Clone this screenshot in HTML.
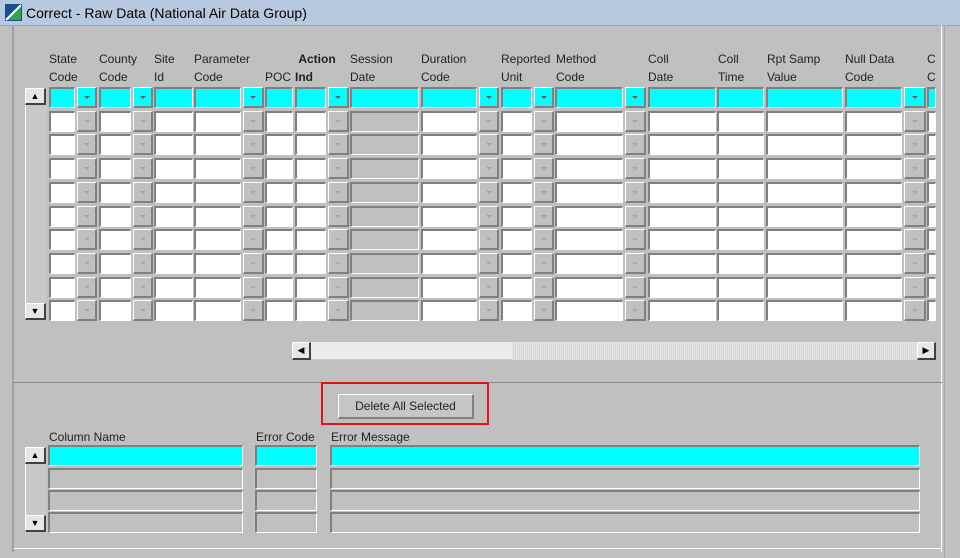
<!DOCTYPE html>
<html><head><meta charset="utf-8"><style>
body{margin:0;width:960px;height:558px;background:#c0c0c0;position:relative;overflow:hidden;font-family:"Liberation Sans",Arial,sans-serif;font-size:12px;color:#000}
.a{position:absolute}
.title{left:0;top:0;width:960px;height:25px;background:#b7c9de;border-bottom:1px solid #9aa8b8}
.title span{position:absolute;left:26px;top:5px;font-size:14px;color:#000}
.f{position:absolute;box-sizing:border-box;border-top:2px solid #808080;border-left:2px solid #808080;border-bottom:1px solid #fff;border-right:1px solid #fff;background:#fff}
.g{background:#c0c0c0}
.c{background:#00ffff}
.b{position:absolute;box-sizing:border-box;background:#c0c0c0;border-top:1px solid #fff;border-left:1px solid #fff;border-bottom:2px solid #808080;border-right:2px solid #808080}
.b.c{background:#00ffff}
.b::after{content:"";position:absolute;left:50%;top:50%;margin:-1px 0 0 -3px;border-left:3px solid transparent;border-right:3px solid transparent;border-top:3px solid #a8a8a8}
.b.c::after{border-top-color:#606060}
.sb{position:absolute;box-sizing:border-box;background:#e6e6e6;border-top:1px solid #fff;border-left:1px solid #fff;border-bottom:2px solid #404040;border-right:2px solid #404040;font-size:9px;text-align:center;line-height:14px}
.h{position:absolute;line-height:18px;color:#222}
</style></head><body>
<div class="a title"><svg class="a" style="left:5px;top:4px" width="17" height="17"><rect width="17" height="17" fill="#1a4d8c"/><polygon points="1,16 16,1 16,16" fill="#2aa84a"/><line x1="1" y1="16" x2="16" y2="1" stroke="#fff" stroke-width="2"/></svg><span>Correct - Raw Data (National Air Data Group)</span></div>
<div class="a" style="left:12px;top:25px;width:2px;height:527px;background:#a0a0a0"></div>
<div class="a" style="left:941px;top:25px;width:1px;height:527px;background:#fff"></div>
<div class="a" style="left:944px;top:25px;width:1px;height:533px;background:#a8a8a8"></div>
<div class="a" style="left:14px;top:548px;width:928px;height:1px;background:#fff"></div>
<div class="a" style="left:14px;top:382px;width:928px;height:1px;background:#8a8a8a"></div>

<div class="h" style="left:49px;top:50px">State<br>Code</div>
<div class="h" style="left:99px;top:50px">County<br>Code</div>
<div class="h" style="left:154px;top:50px">Site<br>Id</div>
<div class="h" style="left:194px;top:50px">Parameter<br>Code</div>
<div class="h" style="left:265px;top:68px">POC</div>
<div class="h" style="left:295px;top:50px;font-weight:bold">&nbsp;Action<br>Ind</div>
<div class="h" style="left:350px;top:50px">Session<br>Date</div>
<div class="h" style="left:421px;top:50px">Duration<br>Code</div>
<div class="h" style="left:501px;top:50px">Reported<br>Unit</div>
<div class="h" style="left:556px;top:50px">Method<br>Code</div>
<div class="h" style="left:648px;top:50px">Coll<br>Date</div>
<div class="h" style="left:718px;top:50px">Coll<br>Time</div>
<div class="h" style="left:767px;top:50px">Rpt Samp<br>Value</div>
<div class="h" style="left:845px;top:50px">Null Data<br>Code</div>
<div class="h" style="left:927px;top:50px;width:8px;overflow:hidden">C<br>C</div>

<div id="grid"></div>
<div class="a" style="left:25px;top:88px;width:21px;height:232px;background:#c8c8c8;border-left:1px solid #fff"></div>
<div class="sb" style="left:25px;top:88px;width:21px;height:17px">&#9650;</div>
<div class="sb" style="left:25px;top:303px;width:21px;height:17px">&#9660;</div>

<div class="a" style="left:292px;top:342px;width:643px;height:18px;background:repeating-linear-gradient(90deg,#e4e4e4 0 1px,#d8d8d8 1px 2px)"></div>
<div class="a" style="left:311px;top:342px;width:201px;height:18px;background:#ececec;box-sizing:border-box;border-bottom:1px solid #c8c8c8"></div>
<div class="sb" style="left:292px;top:342px;width:19px;height:18px;line-height:15px">&#9664;</div>
<div class="sb" style="left:917px;top:342px;width:19px;height:18px;line-height:15px">&#9654;</div>

<div class="a" style="left:321px;top:382px;width:164px;height:39px;border:2px solid #e0141a"></div>
<div class="a" style="left:338px;top:394px;width:136px;height:25px;box-sizing:border-box;border-top:1px solid #fff;border-left:1px solid #fff;border-bottom:2px solid #808080;border-right:2px solid #808080;background:#c6c6c6;text-align:center;line-height:22px;color:#222">Delete All Selected</div>

<div class="h" style="left:49px;top:428px">Column Name</div>
<div class="h" style="left:256px;top:428px">Error Code</div>
<div class="h" style="left:331px;top:428px">Error Message</div>
<div id="g2"></div>
<div class="a" style="left:25px;top:447px;width:21px;height:86px;background:#c8c8c8;border-left:1px solid #fff"></div>
<div class="sb" style="left:25px;top:447px;width:21px;height:17px">&#9650;</div>
<div class="sb" style="left:25px;top:515px;width:21px;height:17px">&#9660;</div>
<script>
var cols=[[49,75,'f'],[77,97,'b'],[99,131,'f'],[133,153,'b'],[154,193,'f'],[194,241,'f'],[243,264,'b'],[265,293,'f'],[295,326,'f'],[328,349,'b'],[350,419,'g'],[421,477,'f'],[479,499,'b'],[501,532,'f'],[534,554,'b'],[555,623,'f'],[625,646,'b'],[648,716,'f'],[717,764,'f'],[766,843,'f'],[845,902,'f'],[904,926,'b'],[927,936,'f']];
var h='';
for(var r=0;r<10;r++){var y=Math.round(87+r*23.7);
 cols.forEach(function(c){var cls=c[2]=='b'?'b':'f'+(c[2]=='g'?' g':'');if(r==0)cls+=' c';
 h+='<div class="'+cls+'" style="left:'+c[0]+'px;top:'+y+'px;width:'+(c[1]-c[0])+'px;height:21px"></div>';});}
document.getElementById('grid').innerHTML=h;
var c2=[[48,243],[255,317],[330,920]];h='';
for(var r=0;r<4;r++){var y=[445,468,490,512][r];
 c2.forEach(function(c){h+='<div class="f '+(r==0?'c':'g')+'" style="left:'+c[0]+'px;top:'+y+'px;width:'+(c[1]-c[0])+'px;height:21px"></div>';});}
document.getElementById('g2').innerHTML=h;
</script>
</body></html>
